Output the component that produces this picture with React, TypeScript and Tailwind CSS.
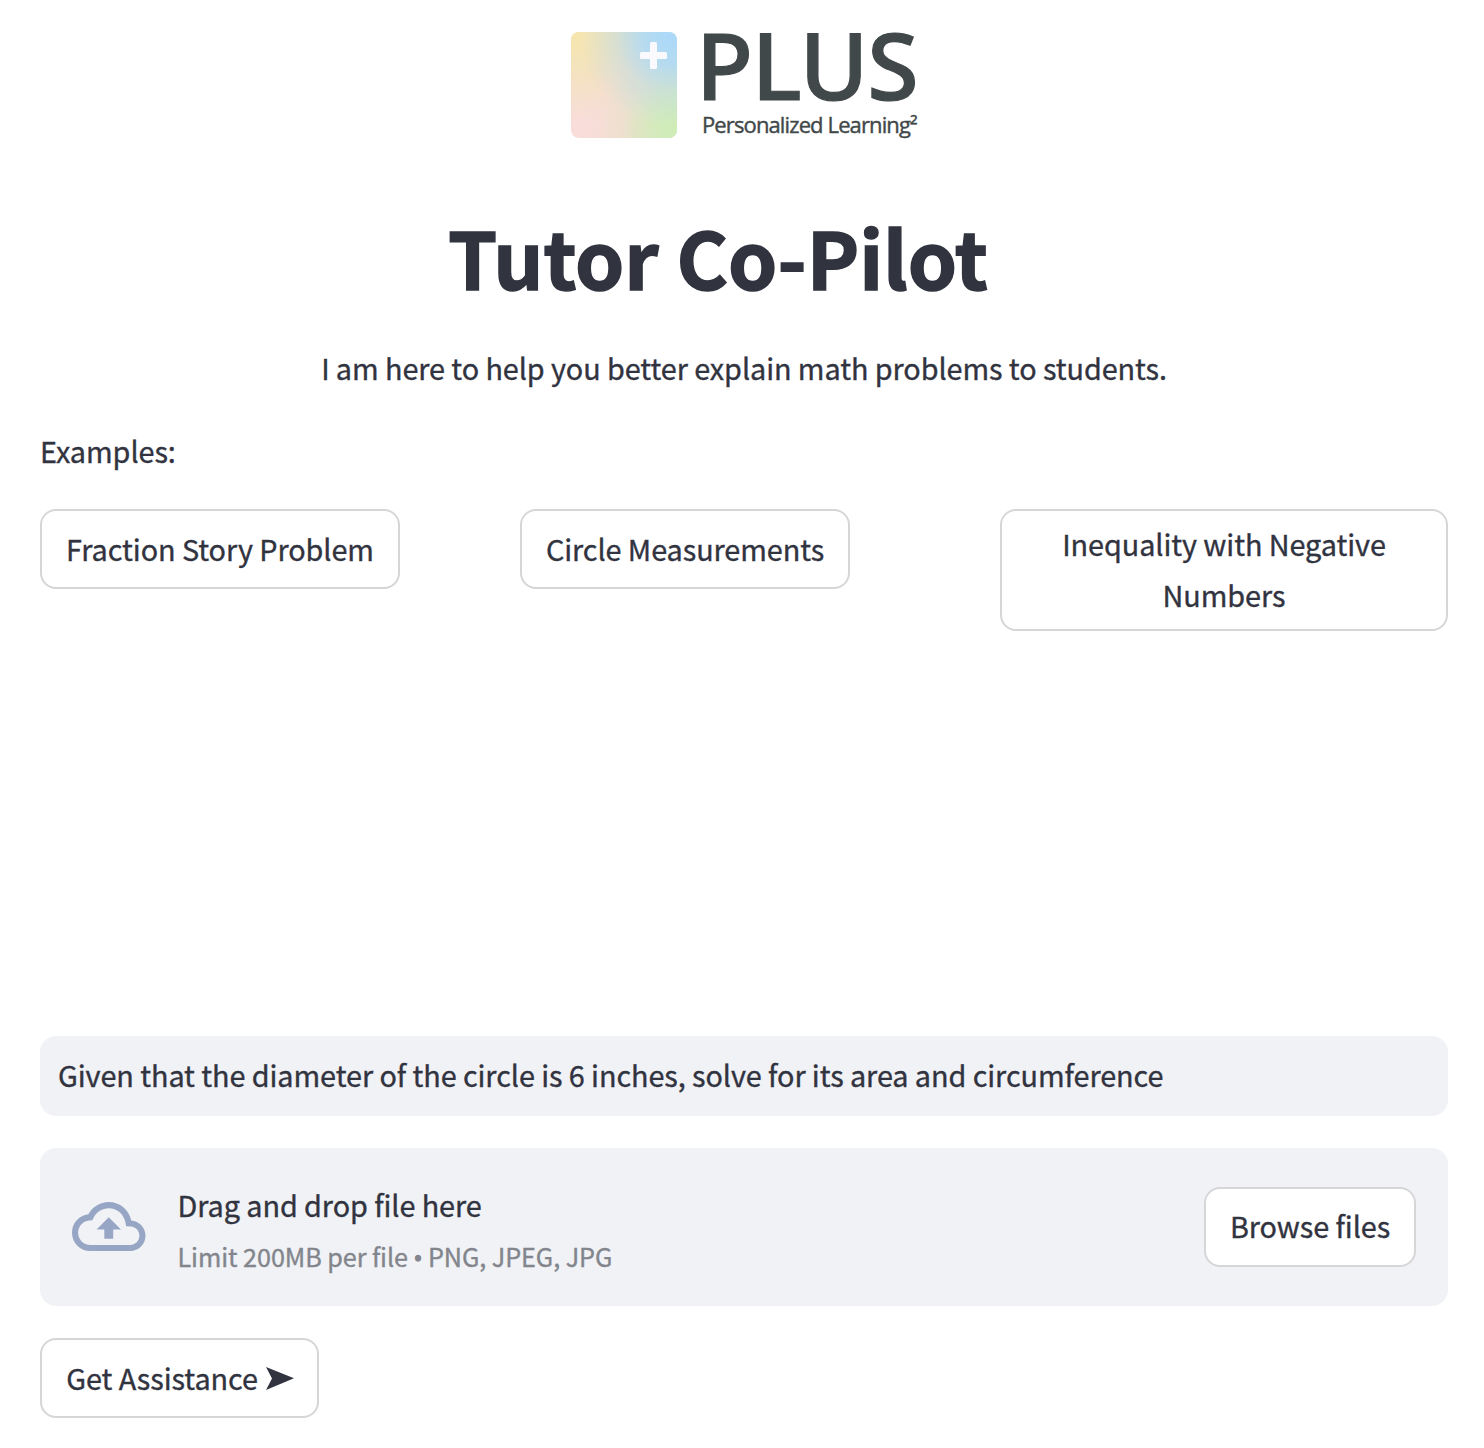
import React from "react";

function Logo() {
  return (
    <div className="flex h-[108px] justify-center gap-[26px]">
      <svg className="mt-px h-[106px] w-[106px] shrink-0" viewBox="0 0 106 106">
        <defs>
          <radialGradient id="y" gradientUnits="userSpaceOnUse" cx="0" cy="0" r="90">
            <stop offset="0" stopColor="#f9e6ac" />
            <stop offset="0.35" stopColor="#f6e5b3" stopOpacity="0.75" />
            <stop offset="1" stopColor="#f3e4b8" stopOpacity="0" />
          </radialGradient>
          <radialGradient id="b" gradientUnits="userSpaceOnUse" cx="100" cy="4" r="90">
            <stop offset="0" stopColor="#abd9fa" />
            <stop offset="0.3" stopColor="#abd9fa" stopOpacity="0.8" />
            <stop offset="0.6" stopColor="#abd9fa" stopOpacity="0.32" />
            <stop offset="1" stopColor="#abd9fa" stopOpacity="0" />
          </radialGradient>
          <radialGradient id="g" gradientUnits="userSpaceOnUse" cx="106" cy="98" r="80">
            <stop offset="0" stopColor="#ceedb6" />
            <stop offset="0.3" stopColor="#ceedb6" stopOpacity="0.75" />
            <stop offset="0.65" stopColor="#ceedb6" stopOpacity="0.22" />
            <stop offset="1" stopColor="#ceedb6" stopOpacity="0" />
          </radialGradient>
          <radialGradient id="p" gradientUnits="userSpaceOnUse" cx="8" cy="94" r="115">
            <stop offset="0" stopColor="#f9dddb" />
            <stop offset="0.4" stopColor="#f4ddd3" />
            <stop offset="1" stopColor="#d8e0c8" />
          </radialGradient>
        </defs>
        <rect width="106" height="106" rx="8" fill="url(#p)" />
        <rect width="106" height="106" rx="8" fill="url(#y)" />
        <rect width="106" height="106" rx="8" fill="url(#g)" />
        <rect width="106" height="106" rx="8" fill="url(#b)" />
        <rect x="79" y="10" width="7" height="27" rx="1.5" fill="#fafafe" />
        <rect x="69" y="20" width="27" height="7" rx="1.5" fill="#fafafe" />
      </svg>
      <div className="w-[214px] whitespace-nowrap text-[#414849]">
        <div className="-mt-[3px] -ml-[7px] h-[80px] font-['Noto_Sans'] text-[93.5px] leading-[72px] font-medium tracking-[-1.3px] [-webkit-text-stroke:1.2px_#414849]">
          PLUS
        </div>
        <div className="-ml-px font-['Open_Sans'] text-[22px] leading-[32px] font-medium tracking-[-0.88px] [-webkit-text-stroke:0.4px_#414849]">
          Personalized Learning²
        </div>
      </div>
    </div>
  );
}

const button =
  "flex items-center justify-center rounded-2xl border-2 border-[#d6d6d9] bg-white";

export default function App() {
  return (
    <main className="h-[1448px] w-[1484px] overflow-hidden bg-white pt-[31px] pr-9 pl-10 font-['Noto_Sans_CJK_SC',sans-serif] text-[28.8px] leading-[51.2px] tracking-[-0.07px] text-[#31333f] [-webkit-text-stroke:0.35px]">
      <Logo />
      <h1 className="mt-[64px] flex h-[106px] w-[1356px] items-center justify-center whitespace-nowrap text-[78.8px] leading-[106px] font-bold [-webkit-text-stroke:1.5px]">
        <span>Tutor Co-Pilot</span>
      </h1>
      <p className="mt-[33px] flex h-[51px] items-center justify-center whitespace-nowrap">
        <span>I am here to help you better explain math problems to students.</span>
      </p>
      <p className="mt-8 flex h-[51px] items-center whitespace-nowrap">
        <span>Examples:</span>
      </p>
      <section className="mt-[33px] grid h-[527px] grid-cols-3 items-start gap-8">
        <button className={button + " h-20 w-[360px] whitespace-nowrap"}>
          <span>Fraction Story Problem</span>
        </button>
        <button className={button + " h-20 w-[330px] whitespace-nowrap"}>
          <span>Circle Measurements</span>
        </button>
        <button className={button + " h-[122px] w-full pb-[2px]"}>
          <span>
            Inequality with Negative
            <br />
            Numbers
          </span>
        </button>
      </section>
      <div className="flex h-20 items-center rounded-2xl bg-[#f0f2f6] px-[18px] pb-[2px] whitespace-nowrap">
        <span>Given that the diameter of the circle is 6 inches, solve for its area and circumference</span>
      </div>
      <section className="mt-8 flex h-[158px] items-center rounded-2xl bg-[#f0f2f6] px-8">
        <svg className="mb-px h-[49px] w-[73.5px] shrink-0" viewBox="0 4 24 16" fill="#98a6c5">
          <path d="M19.35 10.04C18.67 6.59 15.64 4 12 4 9.11 4 6.6 5.64 5.35 8.04 2.34 8.36 0 10.91 0 14c0 3.31 2.69 6 6 6h13c2.76 0 5-2.24 5-5 0-2.64-2.05-4.78-4.65-4.96zM19 18H6c-2.21 0-4-1.79-4-4 0-2.05 1.53-3.76 3.56-3.97l1.07-.11.5-.95C8.08 7.14 9.94 6 12 6c2.62 0 4.88 1.86 5.39 4.43l.3 1.5 1.53.11c1.56.1 2.78 1.41 2.78 2.96 0 1.65-1.35 3-3 3zM8 13h2.55v3h2.9v-3H16l-4-4z" />
        </svg>
        <div className="ml-8 flex-1 pt-[7px] whitespace-nowrap">
          <div className="h-[52px]">
            <span>Drag and drop file here</span>
          </div>
          <div className="h-[51px] text-[25.2px] text-[#83858c]">
            <span>
              Limit 200MB per file <span className="font-['Open_Sans'] text-[24px] [-webkit-text-stroke:1.2px]">•</span> PNG, JPEG, JPG
            </span>
          </div>
        </div>
        <button className={button + " h-20 w-[212px] pb-[2px] whitespace-nowrap"}>
          <span>Browse files</span>
        </button>
      </section>
      <button className={button + " mt-8 h-20 w-[279px] gap-2 whitespace-nowrap"}>
        <span>Get Assistance</span>
        <svg className="mt-px -mr-px h-[23px] w-[28px]" viewBox="0 0 28 23" fill="#31333f">
          <path d="M0 0 28 11.2 0 23 6 11.5z" />
        </svg>
      </button>
    </main>
  );
}
